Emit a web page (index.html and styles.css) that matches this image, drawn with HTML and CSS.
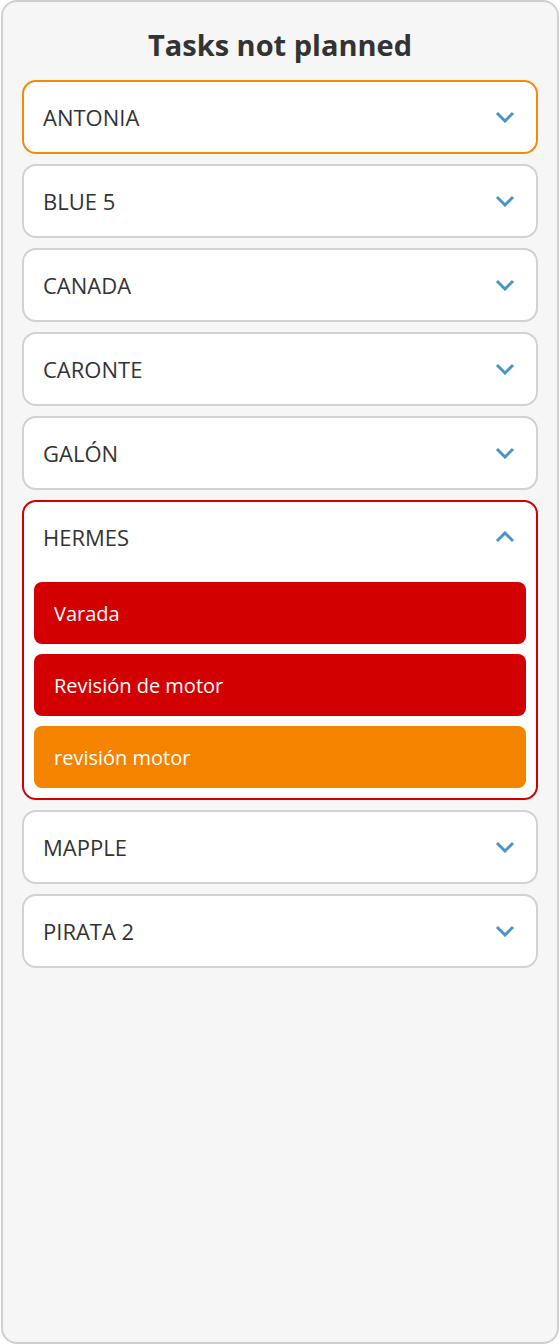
FILE: index.html
```html
<!DOCTYPE html>
<html lang="es">
<head>
  <meta charset="UTF-8" />
  <meta name="viewport" content="width=device-width, initial-scale=1.0"/>
  <title>Tasks not planned</title>
  <link rel="stylesheet" href="styles.css">
</head>
<body>
  <div class="panel">
    <h2>Tasks not planned</h2>

    <div class="boat active">
      <div class="boat-head"><span>ANTONIA</span><svg class="chev" viewBox="0 0 20 12"><path d="M2 2 L10 10 L18 2"/></svg></div>
    </div>
    <div class="boat">
      <div class="boat-head"><span>BLUE 5</span><svg class="chev" viewBox="0 0 20 12"><path d="M2 2 L10 10 L18 2"/></svg></div>
    </div>
    <div class="boat">
      <div class="boat-head"><span>CANADA</span><svg class="chev" viewBox="0 0 20 12"><path d="M2 2 L10 10 L18 2"/></svg></div>
    </div>
    <div class="boat">
      <div class="boat-head"><span>CARONTE</span><svg class="chev" viewBox="0 0 20 12"><path d="M2 2 L10 10 L18 2"/></svg></div>
    </div>
    <div class="boat">
      <div class="boat-head"><span>GALÓN</span><svg class="chev" viewBox="0 0 20 12"><path d="M2 2 L10 10 L18 2"/></svg></div>
    </div>
    <div class="boat open">
      <div class="boat-head"><span>HERMES</span><svg class="chev" viewBox="0 0 20 12"><path d="M2 10 L10 2 L18 10"/></svg></div>
      <div class="tasks">
        <div class="task red">Varada</div>
        <div class="task red">Revisión de motor</div>
        <div class="task orange">revisión motor</div>
      </div>
    </div>
    <div class="boat">
      <div class="boat-head"><span>MAPPLE</span><svg class="chev" viewBox="0 0 20 12"><path d="M2 2 L10 10 L18 2"/></svg></div>
    </div>
    <div class="boat">
      <div class="boat-head"><span>PIRATA 2</span><svg class="chev" viewBox="0 0 20 12"><path d="M2 2 L10 10 L18 2"/></svg></div>
    </div>
  </div>
</body>
</html>
```

FILE: styles.css
```css
body {
  margin: 0;
  font-family: "Open Sans", Arial, sans-serif;
  background: #fff;
}

.panel {
  box-sizing: border-box;
  height: 1344px;
  margin: 0 1px;
  padding: 22px 19px;
  background: #f6f6f6;
  border: 2px solid #cfcfcf;
  border-radius: 16px;
}

h2 {
  margin: 0 0 14px;
  font-size: 29px;
  font-weight: 700;
  line-height: 42px;
  color: #333;
  text-align: center;
}

.boat {
  background: #fff;
  border: 2px solid #d2d2d2;
  border-radius: 14px;
  margin-bottom: 10px;
}

.boat.active {
  border-color: #f28a0a;
}

.boat.open {
  border-color: #d20000;
}

.boat-head {
  display: flex;
  align-items: center;
  justify-content: space-between;
  height: 70px;
  padding: 0 21px 0 19px;
  font-size: 22px;
  color: #333;
}

.chev {
  width: 20px;
  height: 12px;
  fill: none;
  stroke: #4a94c8;
  stroke-width: 3;
}

.tasks {
  display: flex;
  flex-direction: column;
  gap: 10px;
  padding: 10px;
}

.task {
  height: 62px;
  display: flex;
  align-items: center;
  padding-left: 20px;
  border-radius: 8px;
  color: #fff;
  font-size: 20px;
}

.task.red {
  background: #d20000;
}

.task.orange {
  background: #f48400;
}
```
